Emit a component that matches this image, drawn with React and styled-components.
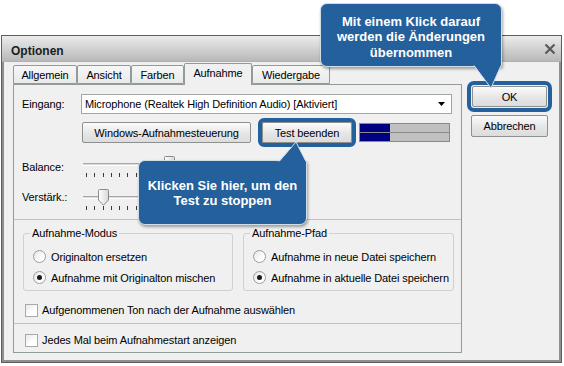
import React from 'react';
import styled, { createGlobalStyle } from 'styled-components';

const BLUE = '#24609b';

const GlobalStyle = createGlobalStyle`
  html, body {
    margin: 0;
    padding: 0;
    background: #ffffff;
  }
  body {
    font-family: "Liberation Sans", Arial, sans-serif;
    font-size: 11px;
    letter-spacing: -0.12px;
    color: #000;
  }
`;

const tabs = [
  { label: 'Allgemein', width: 64 },
  { label: 'Ansicht', width: 54 },
  { label: 'Farben', width: 53 },
  { label: 'Aufnahme', width: 68, active: true },
  { label: 'Wiedergabe', width: 78 },
];

export default function App() {
  return (
    <>
      <GlobalStyle />
      <Page>
        <Window>
          <TitleBar>
            <Title>Optionen</Title>
            <CloseIcon viewBox="0 0 12 12">
              <path d="M1.5 1.5 L10.5 10.5 M10.5 1.5 L1.5 10.5" />
            </CloseIcon>
          </TitleBar>
          <Body>
            <Main>
              <TabStrip>
                {tabs.map((t) => (
                  <Tab key={t.label} $width={t.width} $active={t.active}>
                    {t.label}
                  </Tab>
                ))}
              </TabStrip>
              <Panel>
                <InputRow>
                  <span>Eingang:</span>
                  <Select>
                    <span>Microphone (Realtek High Definition Audio) [Aktiviert]</span>
                    <Arrow viewBox="0 0 7 4">
                      <path d="M0 0 H7 L3.5 4 Z" />
                    </Arrow>
                  </Select>
                </InputRow>
                <ButtonRow>
                  <Button $width={169}>Windows-Aufnahmesteuerung</Button>
                  <Button $width={90} $highlight>Test beenden</Button>
                  <Meter>
                    <MeterBar><MeterFill style={{ width: '34%' }} /></MeterBar>
                    <MeterBar><MeterFill style={{ width: '34%' }} /></MeterBar>
                  </Meter>
                </ButtonRow>
                <SliderRow $first>
                  <SliderLabel $drop={3}>Balance:</SliderLabel>
                  <Slider value={0.5} />
                </SliderRow>
                <SliderRow>
                  <SliderLabel>Verstärk.:</SliderLabel>
                  <Slider value={0.1} />
                </SliderRow>
                <Separator />
                <GroupRow>
                  <Group>
                    <Legend>Aufnahme-Modus</Legend>
                    <Radio label="Originalton ersetzen" />
                    <Radio label="Aufnahme mit Originalton mischen" checked />
                  </Group>
                  <Group>
                    <Legend>Aufnahme-Pfad</Legend>
                    <Radio label="Aufnahme in neue Datei speichern" />
                    <Radio label="Aufnahme in aktuelle Datei speichern" checked />
                  </Group>
                </GroupRow>
                <CheckRow $top={12}>
                  <CheckBox />
                  <span>Aufgenommenen Ton nach der Aufnahme auswählen</span>
                </CheckRow>
                <Separator $top={6} />
                <CheckRow $top={9}>
                  <CheckBox />
                  <span>Jedes Mal beim Aufnahmestart anzeigen</span>
                </CheckRow>
              </Panel>
            </Main>
            <Side>
              <Button $width={75} $height={21} $highlight $offset={1}>OK</Button>
              <Button $width={77} $height={22} $top={8}>Abbrechen</Button>
            </Side>
          </Body>
        </Window>

        <Callout $left={320} $top={3} $width={182} $height={64} $shift={4} $corner="br">
          Mit einem Klick darauf
          <br />
          werden die Änderungen
          <br />
          übernommen
          <Tail viewBox="0 0 30 24" $left={152} $top={61} width="30" height="24">
            <polygon points="1,0 28,0 18,23" fill={BLUE} />
            <path d="M1 0.5 L18 23 L28 0.5" fill="none" stroke="#d3dde8" strokeWidth="1" />
          </Tail>
        </Callout>

        <Callout $left={138} $top={160} $width={169} $height={65} $shift={1} $corner="tr">
          Klicken Sie hier, um den
          <br />
          Test zu stoppen
          <Tail viewBox="0 0 30 21" $left={138} $top={-20} width="30" height="21">
            <polygon points="2,21 29,21 19,1" fill={BLUE} />
            <path d="M2 20.5 L19 1 L29 20.5" fill="none" stroke="#d3dde8" strokeWidth="1" />
          </Tail>
        </Callout>
      </Page>
    </>
  );
}

function Slider({ value }) {
  const ticks = Array.from({ length: 21 });
  return (
    <SliderBox>
      <Track />
      <Thumb viewBox="0 0 11 17" style={{ left: `${3 + value * 166 - 5}px` }}>
        <defs>
          <linearGradient id="thumbFill" x1="0" x2="1" y1="0" y2="0">
            <stop offset="0" stopColor="#ffffff" />
            <stop offset="1" stopColor="#d8d8d8" />
          </linearGradient>
        </defs>
        <path
          d="M1.5 0.5 H9.5 Q10.5 0.5 10.5 1.5 V11 L5.5 16.2 L0.5 11 V1.5 Q0.5 0.5 1.5 0.5 Z"
          fill="url(#thumbFill)"
          stroke="#8a8a8a"
        />
      </Thumb>
      <Ticks>
        {ticks.map((_, i) => (
          <TickMark key={i} />
        ))}
      </Ticks>
    </SliderBox>
  );
}

function Radio({ label, checked }) {
  return (
    <RadioRow>
      <RadioCircle>{checked && <RadioDot />}</RadioCircle>
      <span>{label}</span>
    </RadioRow>
  );
}

const Page = styled.div`
  position: relative;
  width: 564px;
  height: 366px;
  box-sizing: border-box;
  padding: 35px 0 0 1px;
  overflow: hidden;
`;

const Window = styled.div`
  width: 561px;
  height: 328px;
  box-sizing: border-box;
  border: 1px solid #5e5e5e;
  background: #f0f0f0;
  box-shadow: inset 0 0 0 2px #8f8f8f;
  display: flex;
  flex-direction: column;
`;

const TitleBar = styled.div`
  display: flex;
  align-items: center;
  justify-content: space-between;
  height: 26px;
  padding: 1px 5px 0 9px;
  background: linear-gradient(#ececec, #b8b8b8);
  border-bottom: 1px solid #b0b0b0;
  box-sizing: border-box;
`;

const Title = styled.span`
  margin-top: 3px;
  font-weight: bold;
  font-size: 12px;
  letter-spacing: 0;
  color: #1c1c1c;
`;

const CloseIcon = styled.svg`
  width: 12px;
  height: 12px;
  path {
    stroke: #5a5a5a;
    stroke-width: 2.2;
    fill: none;
  }
`;

const Body = styled.div`
  display: flex;
  padding: 1px 0 0 11px;
`;

const Main = styled.div`
  width: 449px;
  display: flex;
  flex-direction: column;
`;

const TabStrip = styled.div`
  display: flex;
  align-items: flex-end;
  height: 21px;
  position: relative;
  z-index: 1;
`;

const Tab = styled.div`
  display: flex;
  align-items: center;
  justify-content: center;
  box-sizing: border-box;
  width: ${(p) => p.$width}px;
  height: ${(p) => (p.$active ? '22px' : '19px')};
  margin-bottom: ${(p) => (p.$active ? '-1px' : '0')};
  padding-bottom: ${(p) => (p.$active ? '3px' : '0')};
  border: 1px solid #919b9c;
  border-bottom: ${(p) => (p.$active ? 'none' : '1px solid #919b9c')};
  border-radius: 2px 2px 0 0;
  background: ${(p) => (p.$active ? '#f0f0f0' : 'linear-gradient(#f7f7f7, #e9e9e9)')};
  position: relative;
  z-index: ${(p) => (p.$active ? 2 : 1)};
`;

const Panel = styled.div`
  height: 269px;
  box-sizing: border-box;
  border: 1px solid #919b9c;
  background: #f0f0f0;
  display: flex;
  flex-direction: column;
`;

const InputRow = styled.div`
  display: grid;
  grid-template-columns: 59px 371px;
  align-items: center;
  margin-top: 9px;
  padding-left: 8px;
`;

const Select = styled.div`
  display: flex;
  align-items: center;
  justify-content: space-between;
  height: 20px;
  box-sizing: border-box;
  padding: 0 6px 0 3px;
  background: #ffffff;
  border: 1px solid #a5a5a5;
`;

const Arrow = styled.svg`
  width: 7px;
  height: 4px;
  path {
    fill: #000;
  }
`;

const ButtonRow = styled.div`
  display: flex;
  align-items: center;
  gap: 11px;
  margin-top: 8px;
  padding-left: 68px;
`;

const Button = styled.div`
  display: flex;
  align-items: center;
  justify-content: center;
  box-sizing: border-box;
  width: ${(p) => p.$width}px;
  height: ${(p) => p.$height || 21}px;
  margin-top: ${(p) => p.$top || 0}px;
  white-space: nowrap;
  border: 1px solid #8e8f8f;
  border-radius: 2px;
  background: linear-gradient(#fbfbfb, #e6e6e6 55%, #dcdcdc);
  outline: ${(p) => (p.$highlight ? `4px solid ${BLUE}` : 'none')};
  outline-offset: ${(p) => p.$offset || 0}px;
`;

const Meter = styled.div`
  display: flex;
  flex-direction: column;
  width: 91px;
  height: 19px;
  box-sizing: border-box;
  margin-left: -4px;
  border: 1px solid #8a8a8a;
  background: #8a8a8a;
  gap: 1px;
`;

const MeterBar = styled.div`
  flex: 1;
  background: #c0c0c0;
`;

const MeterFill = styled.div`
  height: 100%;
  background: #000080;
`;

const SliderRow = styled.div`
  display: grid;
  grid-template-columns: 61px 170px;
  align-items: start;
  margin-top: ${(p) => (p.$first ? 13 : 3)}px;
  padding-left: 8px;
`;

const SliderLabel = styled.span`
  line-height: 17px;
  padding-top: ${(p) => p.$drop || 0}px;
`;

const SliderBox = styled.div`
  position: relative;
  height: 30px;
`;

const Track = styled.div`
  margin-top: 7px;
  height: 3px;
  box-sizing: border-box;
  border-top: 1px solid #a8a8a8;
  border-bottom: 1px solid #ffffff;
  background: #dadada;
`;

const Thumb = styled.svg`
  position: absolute;
  top: 0;
  width: 11px;
  height: 17px;
`;

const Ticks = styled.div`
  display: flex;
  justify-content: space-between;
  width: 167px;
  margin: 7px 0 0 3px;
`;

const TickMark = styled.div`
  width: 1px;
  height: 4px;
  background: #3a3a3a;
`;

const Separator = styled.div`
  height: 1px;
  margin-top: ${(p) => p.$top || 0}px;
  background: #c2c2c2;
`;

const GroupRow = styled.div`
  display: flex;
  gap: 10px;
  margin-top: 7px;
  padding-left: 9px;
`;

const Group = styled.fieldset`
  width: 210px;
  box-sizing: border-box;
  margin: 0;
  padding: 6px 4px 2px 9px;
  border: 1px solid #d0d0d0;
  border-radius: 3px;
  white-space: nowrap;
`;

const Legend = styled.legend`
  padding: 0 2px;
  margin-left: -3px;
  line-height: 13px;
`;

const RadioRow = styled.div`
  display: flex;
  align-items: center;
  gap: 5px;
  height: 21px;
`;

const RadioCircle = styled.div`
  display: flex;
  align-items: center;
  justify-content: center;
  flex: none;
  width: 13px;
  height: 13px;
  box-sizing: border-box;
  border-radius: 50%;
  border: 1px solid #9c9c9c;
  background: linear-gradient(135deg, #e4e4e4, #ffffff 70%);
`;

const RadioDot = styled.div`
  width: 5px;
  height: 5px;
  border-radius: 50%;
  background: #1a1a1a;
`;

const CheckRow = styled.div`
  display: flex;
  align-items: center;
  gap: 4px;
  height: 14px;
  margin-top: ${(p) => p.$top}px;
  padding-left: 11px;
`;

const CheckBox = styled.div`
  width: 13px;
  height: 13px;
  box-sizing: border-box;
  border: 1px solid #a9a9a9;
  background: linear-gradient(135deg, #e8e8e8, #ffffff 60%);
`;

const Side = styled.div`
  display: flex;
  flex-direction: column;
  align-items: center;
  width: 77px;
  margin-left: 9px;
  padding-top: 23px;
`;

const Callout = styled.div`
  position: absolute;
  left: ${(p) => p.$left}px;
  top: ${(p) => p.$top}px;
  width: ${(p) => p.$width}px;
  height: ${(p) => p.$height}px;
  box-sizing: border-box;
  padding-top: ${(p) => p.$shift || 0}px;
  display: flex;
  align-items: center;
  justify-content: center;
  text-align: center;
  background: ${BLUE};
  border: 1px solid #d3dde8;
  border-radius: 7px;
  ${(p) => (p.$corner === 'br' ? 'border-bottom-right-radius: 2px;' : '')}
  ${(p) => (p.$corner === 'tr' ? 'border-top-right-radius: 2px;' : '')}
  box-shadow: 1px 2px 3px rgba(0, 0, 0, 0.35);
  color: #ffffff;
  font-weight: bold;
  font-size: 13px;
  letter-spacing: 0;
  line-height: 15.5px;
  z-index: 5;
`;

const Tail = styled.svg`
  position: absolute;
  left: ${(p) => p.$left}px;
  top: ${(p) => p.$top}px;
  overflow: visible;
`;
